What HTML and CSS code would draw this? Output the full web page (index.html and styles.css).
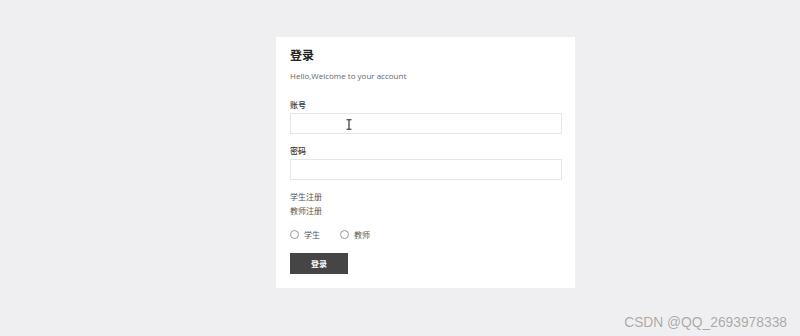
FILE: index.html
```html
<!DOCTYPE html>
<html lang="zh-CN">
<head>
    <meta charset="UTF-8">
    <title>登录</title>
    <link rel="stylesheet" href="styles.css">
</head>
<body>
    <div class="login-box">
        <h2 class="title">登录</h2>
        <p class="welcome">Hello,Welcome to your account</p>

        <label class="field-label">账号</label>
        <div class="input-wrap">
            <input type="text" class="field-input">
            <svg class="cursor" width="6" height="11" viewBox="0 0 6 11">
                <path d="M0.5 0.8H5.5M3 0.8V10.2M0.5 10.2H5.5" stroke="#222" stroke-width="1.1" fill="none"/>
            </svg>
        </div>

        <label class="field-label">密码</label>
        <input type="password" class="field-input">

        <div class="links">
            <a href="#">学生注册</a>
            <a href="#">教师注册</a>
        </div>

        <div class="roles">
            <label class="role"><span class="radio"></span>学生</label>
            <label class="role"><span class="radio"></span>教师</label>
        </div>

        <button class="btn-login">登录</button>
    </div>

    <div class="watermark">CSDN @QQ_2693978338</div>
</body>
</html>
```

FILE: styles.css
```css
body {
    margin: 0;
    background: #efeff1;
    font-family: "Open Sans", "Noto Sans CJK SC", sans-serif;
    color: #333;
    height: 336px;
    overflow: hidden;
}

.login-box {
    width: 272px;
    margin: 37px 0 0 276px;
    padding: 11px 13px 14px 14px;
    background: #fff;
    display: flex;
    flex-direction: column;
}

.title {
    margin: 0;
    font-size: 12px;
    line-height: 16px;
    font-weight: 700;
    color: #222;
}

.welcome {
    margin: 7px 0 0;
    font-size: 8px;
    line-height: 10px;
    color: #666;
}

.field-label {
    margin-top: 19px;
    font-size: 8px;
    line-height: 10px;
    font-weight: 500;
    color: #333;
}

.field-label + .input-wrap,
.field-label + .field-input {
    margin-top: 3px;
}

.field-label:nth-of-type(2) {
    margin-top: 12px;
}

.input-wrap {
    position: relative;
    display: flex;
}

.field-input {
    width: 100%;
    height: 21px;
    box-sizing: border-box;
    border: 1px solid #e6e6e6;
    background: #fff;
    padding: 0 8px;
    outline: none;
}

.cursor {
    position: absolute;
    left: 56px;
    top: 6px;
}

.links {
    margin-top: 10px;
    display: flex;
    flex-direction: column;
}

.links a {
    font-size: 8px;
    line-height: 14px;
    color: #555;
    text-decoration: none;
}

.roles {
    margin-top: 10px;
    display: flex;
    gap: 20px;
    height: 12px;
    align-items: center;
}

.role {
    display: flex;
    align-items: center;
    gap: 5px;
    font-size: 8px;
    color: #555;
}

.radio {
    width: 9px;
    height: 9px;
    border: 1px solid #999;
    border-radius: 50%;
    box-sizing: border-box;
}

.btn-login {
    margin-top: 13px;
    width: 58px;
    height: 21px;
    border: none;
    background: #454545;
    color: #fff;
    font-family: "Noto Sans CJK SC", sans-serif;
    font-size: 8px;
    font-weight: 700;
    padding: 0;
}

.watermark {
    position: absolute;
    right: 13px;
    bottom: 6px;
    font-family: "Liberation Sans", sans-serif;
    font-size: 13.8px;
    color: #a8a8a8;
    text-shadow: 0 0 1px #fff;
}
```
